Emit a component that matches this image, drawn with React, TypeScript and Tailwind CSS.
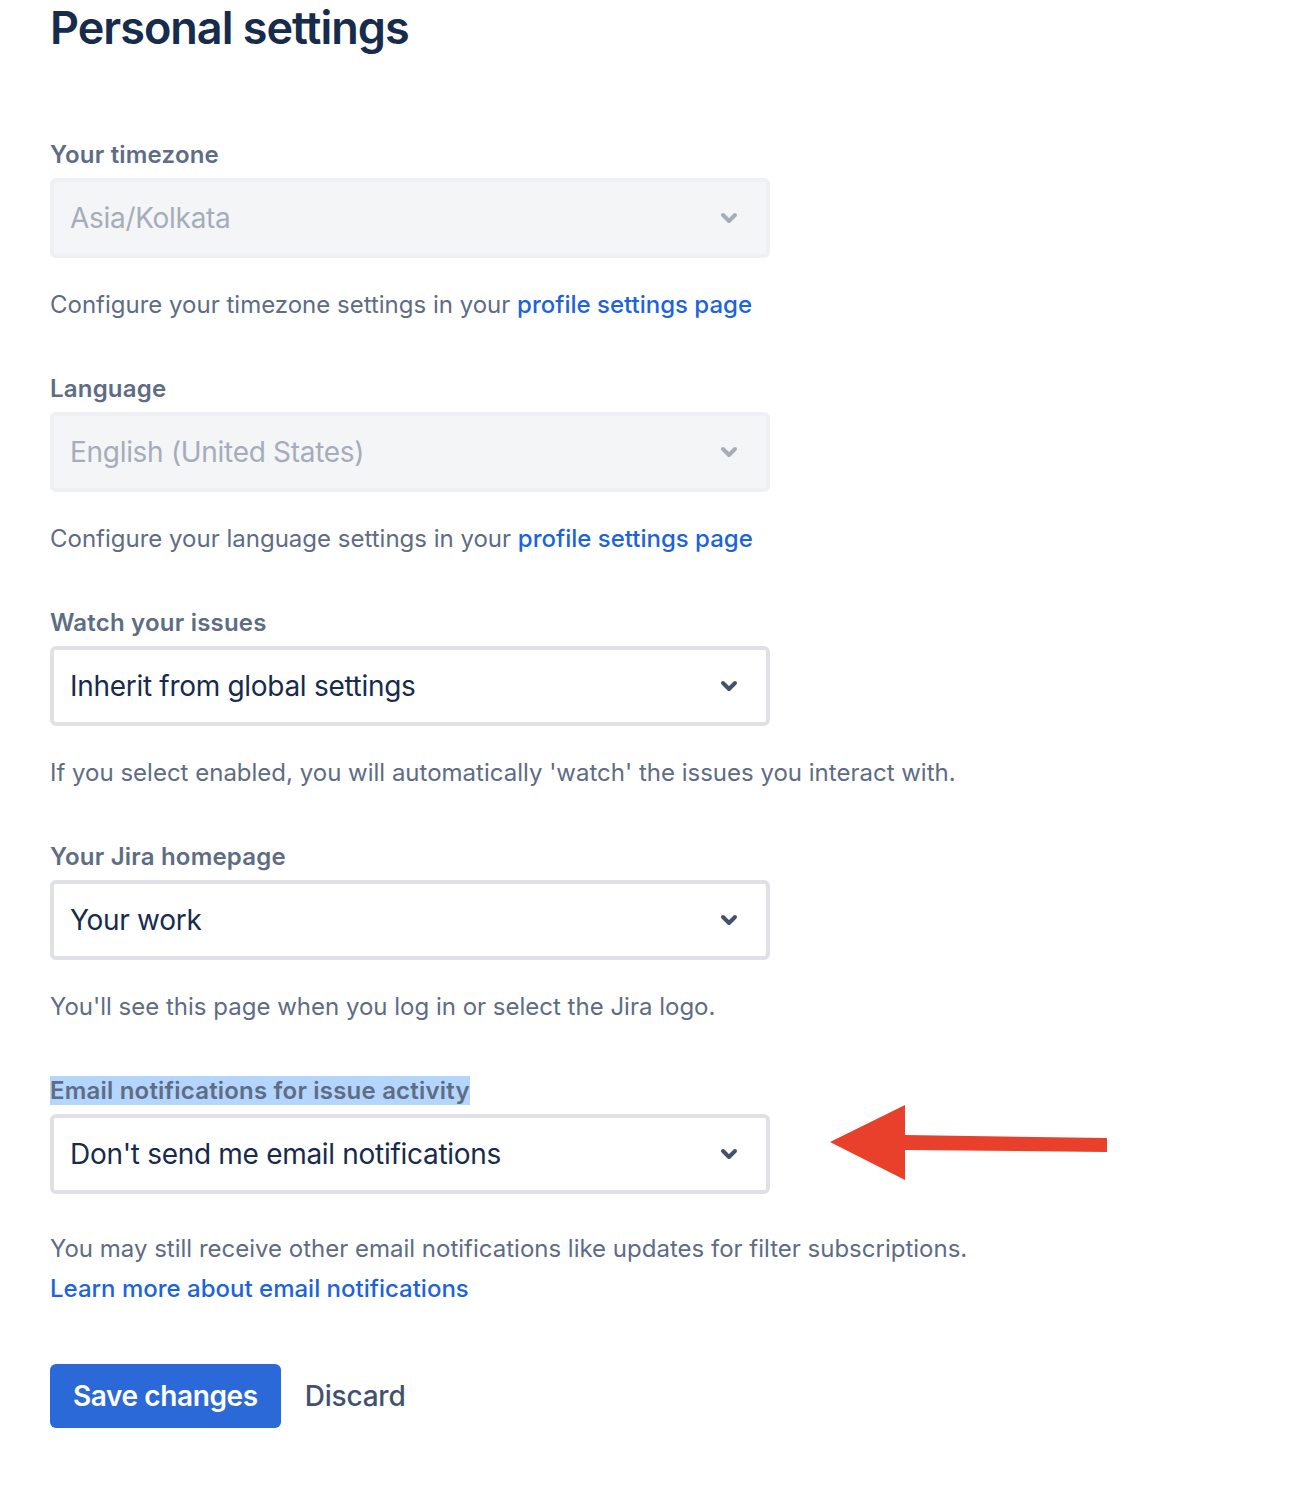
import { ReactNode } from 'react'

const font = { fontFamily: 'Inter, "Noto Sans", sans-serif' }

function Chevron({ disabled }: { disabled?: boolean }) {
  return (
    <svg width="18" height="12" viewBox="0 0 18 12" className="shrink-0">
      <path
        d="M3 3 L9 9 L15 3"
        fill="none"
        stroke={disabled ? '#a5adba' : '#42526e'}
        strokeWidth="4"
        strokeLinecap="round"
        strokeLinejoin="round"
      />
    </svg>
  )
}

function Select({ value, disabled }: { value: string; disabled?: boolean }) {
  return (
    <div
      className={
        'flex h-[80px] w-[720px] items-center justify-between rounded-[6px] border-[4px] pl-[16px] pr-[28px] ' +
        (disabled ? 'border-[#eef0f3] bg-[#f4f5f7]' : 'border-[#dfe1e6] bg-white')
      }
    >
      <span
        className={
          'text-[28px] leading-[36px] tracking-[-0.3px] ' + (disabled ? 'text-[#a5adba]' : 'text-[#172b4d]')
        }
      >
        {value}
      </span>
      <Chevron disabled={disabled} />
    </div>
  )
}

function Field({
  label,
  value,
  disabled,
  highlight,
  children,
}: {
  label: string
  value: string
  disabled?: boolean
  highlight?: boolean
  children: ReactNode
}) {
  return (
    <div className="flex flex-col">
      <div className="h-[32px] text-[24px] font-semibold leading-[32px] tracking-[0.2px] text-[#5e6c84]">
        <span className={highlight ? 'bg-[#b4d5fe]' : ''}>{label}</span>
      </div>
      <div className="mt-[7px]">
        <Select value={value} disabled={disabled} />
      </div>
      {children}
    </div>
  )
}

const link = 'font-medium text-[#1d63dc]'

export default function App() {
  return (
    <div className="relative min-h-[1494px] bg-white pl-[50px]" style={font}>
      <h1 className="text-[45px] font-semibold leading-[56px] tracking-[-1px] text-[#172b4d]">Personal settings</h1>

      <div className="mt-[83px] flex flex-col gap-[52px]">
        <Field label="Your timezone" value="Asia/Kolkata" disabled>
          <p className="mt-[31px] text-[24px] leading-[32px] text-[#5e6c84]">
            Configure your timezone settings in your <span className={link}>profile settings page</span>
          </p>
        </Field>

        <Field label="Language" value="English (United States)" disabled>
          <p className="mt-[31px] text-[24px] leading-[32px] text-[#5e6c84]">
            Configure your language settings in your <span className={link}>profile settings page</span>
          </p>
        </Field>

        <Field label="Watch your issues" value="Inherit from global settings">
          <p className="mt-[31px] text-[24px] leading-[32px] text-[#5e6c84]">
            If you select enabled, you will automatically 'watch' the issues you interact with.
          </p>
        </Field>

        <Field label="Your Jira homepage" value="Your work">
          <p className="mt-[31px] text-[24px] leading-[32px] text-[#5e6c84]">
            You'll see this page when you log in or select the Jira logo.
          </p>
        </Field>

        <Field label="Email notifications for issue activity" value="Don't send me email notifications" highlight>
          <div className="mt-[35px] text-[24px] leading-[40px] text-[#5e6c84]">
            <p>You may still receive other email notifications like updates for filter subscriptions.</p>
            <p className={link}>Learn more about email notifications</p>
          </div>
        </Field>
      </div>

      <div className="mt-[55px] flex items-center gap-[24px]">
        <button className="h-[64px] rounded-[6px] bg-[#2b69d9] px-[23px] text-[28px] font-semibold tracking-[-0.4px] text-white">
          Save changes
        </button>
        <span className="text-[28px] font-medium tracking-[-0.2px] text-[#42526e]">Discard</span>
      </div>

      <svg className="absolute left-[828px] top-[1102px]" width="284" height="82" viewBox="828 1102 284 82">
        <polygon points="830,1142 905,1105 905,1135 1107,1138 1107,1152 905,1150 905,1180" fill="#e8402a" />
      </svg>
    </div>
  )
}
